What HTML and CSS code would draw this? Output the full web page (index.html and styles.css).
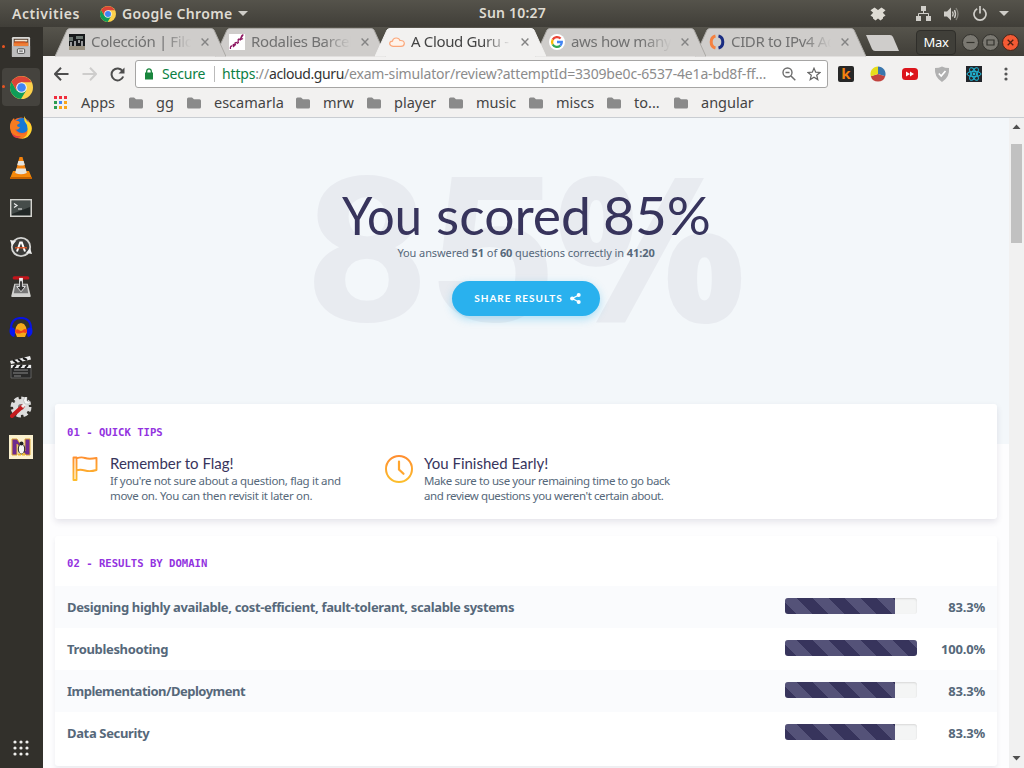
FILE: index.html
```html
<!DOCTYPE html>
<html lang="en">
<head>
<meta charset="utf-8">
<title>A Cloud Guru - Exam results</title>
<link rel="stylesheet" href="styles.css">
</head>
<body>
<svg width="0" height="0" class="defs">
  <defs>
    <linearGradient id="amber" gradientUnits="userSpaceOnUse" x1="0" y1="0" x2="0" y2="28"><stop offset="0" stop-color="#ff8c30"/><stop offset="1" stop-color="#fcc02c"/></linearGradient>
    <symbol id="chrome" viewBox="0 0 24 24">
      <circle cx="12" cy="12" r="12" fill="#fcd04b"/>
      <path d="M1.6 6A12 12 0 0 0 11.5 24L17 14.8 12 12 6.8 15z" fill="#0f9d58"/>
      <path d="M1.6 6A12 12 0 0 1 22.4 6.5H12L6.8 15z" fill="#db4437"/>
      <circle cx="12" cy="12" r="5.6" fill="#f4f4f4"/><circle cx="12" cy="12" r="4.5" fill="#4285f4"/>
    </symbol>
    <symbol id="folder" viewBox="0 0 14 12"><path d="M0 2Q0 .5 1.5 .5H5L7 2.3H12.5Q14 2.3 14 3.8V10Q14 11.5 12.5 11.5H1.5Q0 11.5 0 10z" fill="#8a8a8a"/></symbol>
    <symbol id="close" viewBox="0 0 8 8"><path d="M.6.6 7.4 7.4M7.4.6.6 7.4" stroke="#848484" stroke-width="1.4"/></symbol>
    <symbol id="tabshape" viewBox="0 0 171 29"><path d="M0 28.5 12 2Q13 .5 15 .5H156Q158 .5 159 2L171 28.5"/></symbol>
  </defs>
</svg>

<header class="panel">
  <span class="activities">Activities</span>
  <svg class="panel-chrome" width="16" height="16"><use href="#chrome"/></svg>
  <span class="appname">Google Chrome</span>
  <svg class="caret" width="10" height="5"><path d="M0 0H10L5 5z" fill="#cfcdc8"/></svg>
  <span class="clock">Sun 10:27</span>
  <div class="tray">
    <svg width="16" height="14" viewBox="0 0 16 14"><path d="M4.5 .5 8 3 11.5 .5 15.500 3.200 12.800 5.800 15.500 8.500 13 10.200V11.500L10.500 13.500 8 11.500 5.500 13.500 3 11.500V10.200L.5 8.500 3.200 5.800 .5 3.200z" fill="#dedbd3"/></svg>
    <svg class="net" width="15" height="15" viewBox="0 0 15 15"><path d="M5 0H10V5H5zM0 10H5V15H0zM10 10H15V15H10z" fill="#d0cec9"/><path d="M7.500 5V8M2.500 10V7.500H12.500V10" stroke="#d0cec9" fill="none"/></svg>
    <svg class="vol" width="15" height="14" viewBox="0 0 15 14"><path d="M0 4.500H3L7 .500V13.500L3 9.500H0z" fill="#d0cec9"/><path d="M8.500 4.500Q10 7 8.500 9.500M10.500 3Q12.500 7 10.500 11" stroke="#d0cec9" stroke-width="1.400" fill="none"/><path d="M12 1Q16 7 12 13" stroke="#86847d" stroke-width="1.300" fill="none"/></svg>
    <svg class="power" width="14" height="15" viewBox="0 0 14 15"><path d="M4.200 2.800A6 6 0 1 0 9.800 2.800M7 0V7.500" stroke="#d0cec9" stroke-width="1.700" fill="none"/></svg>
    <svg class="caret2" width="10" height="5"><path d="M0 0H10L5 5z" fill="#cfcdc8"/></svg>
  </div>
</header>

<div class="desktop">
<nav class="dock">
  <div class="app running"><svg width="20" height="22" viewBox="0 0 22 24"><rect x="1" y="1" width="20" height="22" rx="1.500" fill="#d8d8d6"/><path d="M3 3H19V12H3z" fill="#4b3425"/><path d="M4 4H18V6H4z" fill="#f5e5cf"/><path d="M3 7H19V11H3z" fill="#ee7f36"/><path d="M4 6H15L17 8H4z" fill="#d85a20"/><path d="M1 11H21V23H1z" fill="#bdbdbd"/><rect x="7" y="14" width="8" height="5" rx="1" fill="#eee" stroke="#444"/><path d="M9 16.500H13" stroke="#333"/></svg></div>
  <div class="app running active"><svg width="23" height="23"><use href="#chrome" width="23" height="23"/></svg></div>
  <div class="app"><svg width="22" height="23" viewBox="0 0 22 23"><circle cx="11" cy="12" r="10.500" fill="#f4662a"/><circle cx="12" cy="9.500" r="7.500" fill="#1578d5"/><path d="M14 0 17 5Q23 8 21.500 15 19 23 11 22.800 17 20 17.500 14 18 9 14.500 5z" fill="#ffd52e"/><path d="M0 12Q-.500 6 4 2L5 5Q9 4 10 7L7 9Q7 11 10 11 8 15 5 13 6 19 12 18.500 17 18 17.500 14 18 21 11 22.500 1 22 0 12" fill="#f77b20"/><path d="M1 16Q4 21 11 20 7 24 3 20z" fill="#e23b45"/></svg></div>
  <div class="app"><svg width="22" height="23" viewBox="0 0 22 23"><path d="M3 15H19L22 22.500H0z" fill="#f58a0b"/><path d="M9.500 1H12.500L17 18Q11 21 5 18z" fill="#f5820c"/><path d="M8.300 5H13.700L14.800 9Q11 10 7.200 9zM6.300 12.500H15.700L16.800 17Q11 19.500 5.200 17z" fill="#e6e4df"/><path d="M0 21H22V23H0z" fill="#c66200"/></svg></div>
  <div class="app term"><svg width="22" height="18" viewBox="0 0 22 18"><rect x=".750" y=".750" width="20.500" height="16.500" fill="#222827" stroke="#d4d4d0" stroke-width="1.500"/><path d="M2 2H20V8L2 15z" fill="#454c4a"/><path d="M4 4.500 7 6.500 4 8.500M8 10H12" stroke="#eee" stroke-width="1.200" fill="none"/></svg></div>
  <div class="app"><svg width="22" height="22" viewBox="0 0 22 22"><circle cx="11" cy="11" r="9.200" fill="#3c3c3a" stroke="#d5d5d3" stroke-width="1.800"/><path d="M0 4 6 5 2 10zM22 18 16 17 20 12z" fill="#eee"/><path d="M7 15.500 10.200 6.500H11.800L15 15.500" stroke="#fff" stroke-width="2" fill="none"/><path d="M5 11.800H17" stroke="#e85523" stroke-width="1.300"/></svg></div>
  <div class="app"><svg width="20" height="22" viewBox="0 0 20 23"><path d="M3 8H17L20 20V22H0V20z" fill="#d1d1cf"/><path d="M4 9H16L17.500 18H2.500z" fill="#777"/><path d="M3 2H17" stroke="#c3141b" stroke-width="3.500" stroke-linecap="round"/><path d="M8 2H12V7H8z" fill="#eee"/><path d="M8.500 5H11.500V11H14.500L10 16.500 5.500 11H8.500z" fill="#333" stroke="#eee" stroke-width=".900"/></svg></div>
  <div class="app"><svg width="24" height="21" viewBox="0 0 24 21"><path d="M6 15 7 10 9 7 12 6 15 7 17 10 18 15 16 20H8z" fill="#f5a91a"/><path d="M5 14Q8 11 10 13T14 13 18 13 19 14L17 16Q14 15 12 16T7 16z" fill="#f2431a"/><path d="M2 12Q2 1 12 1T22 12" stroke="#0914e2" stroke-width="2.200" fill="none"/><path d="M1 11Q6 9 6 14T5 20Q-1 18 1 11M23 11Q18 9 18 14T19 20Q25 18 23 11" fill="#0817f0"/></svg></div>
  <div class="app"><svg width="22" height="23" viewBox="0 0 22 23"><path d="M1 9H21V22H1z" fill="#292929" stroke="#777" stroke-width=".700"/><path d="M0 5 20 0 21 3.500 1 8z" fill="#eee"/><path d="M1 9H21V12H1z" fill="#eee"/><path d="M3 4 7 7M8 3 12 6M13 2 17 4M3 12 6 9M9 12 12 9M15 12 18 9" stroke="#171717" stroke-width="2"/><path d="M4 14H18M3 17H18M4 20H11" stroke="#888"/></svg></div>
  <div class="app"><svg width="22" height="22" viewBox="0 0 22 22"><circle cx="11" cy="11" r="8" fill="#ddd" stroke="#ddd" stroke-width="5" stroke-dasharray="4 2.280"/><circle cx="11" cy="11" r="3" fill="#777"/><path d="M2 20 13 10" stroke="#c61c1f" stroke-width="4" stroke-linecap="round"/><path d="M12 11 17 6" stroke="#eee" stroke-width="3"/><path d="M15 1Q12 4 15 8 19 9 21 6L17 5 17 1" fill="#f5f5f5" stroke="#999" stroke-width=".500"/></svg></div>
  <div class="app"><svg width="24" height="24" viewBox="0 0 24 24"><path d="M0 0H24V24H0z" fill="#fbf1cf"/><path d="M3 4H8L16 16V4H21V20H17L8 9V20H3z" fill="#6e2a90" stroke="#dca530"/><ellipse cx="12.500" cy="14" rx="3.200" ry="5" fill="#f4f4f4" stroke="#222"/><circle cx="12.500" cy="8.500" r="2" fill="#222"/><path d="M9 19.500H12M13 19.500H16" stroke="#edb82b" stroke-width="2"/></svg></div>
  <svg class="grid" width="16" height="16" viewBox="0 0 16 16"><g fill="#efefed"><circle cx="2" cy="2" r="1.600"/><circle cx="8" cy="2" r="1.600"/><circle cx="14" cy="2" r="1.600"/><circle cx="2" cy="8" r="1.600"/><circle cx="8" cy="8" r="1.600"/><circle cx="14" cy="8" r="1.600"/><circle cx="2" cy="14" r="1.600"/><circle cx="8" cy="14" r="1.600"/><circle cx="14" cy="14" r="1.600"/></g></svg>
</nav>

<main class="window">
  <div class="tabstrip">
    <div class="tab t1"><svg class="shape" width="171" height="29"><use href="#tabshape"/></svg>
      <svg class="fav" width="16" height="16" viewBox="0 0 16 16"><path d="M0 0H16V16H0z" fill="#17191b"/><path d="M0 3H4V7H0zM7 2H14V5H7z" fill="#6c7772"/><path d="M0 12H16V16H0z" fill="#99907f"/><path d="M6 7V12M10 6V9M13 7V12M2 8V12" stroke="#ddd" stroke-width="1.300"/></svg>
      <span class="label">Colección | Filosofía</span><svg class="x" width="8" height="8"><use href="#close"/></svg></div>
    <div class="tab t2"><svg class="shape" width="171" height="29"><use href="#tabshape"/></svg>
      <svg class="fav" width="16" height="16" viewBox="0 0 16 16"><path d="M0 0H16V16H0z" fill="#fff"/><path d="M1.500 15Q1 12 3 12M4 12.500Q6 12 5 10.500 3 11 5 13M6.500 11.500 6 9Q8 7.500 8.500 10M10 4.500Q8 9 10 8.500M11 6.500Q13 0 14 1 10 7 14 4.500M8.500 6 12 4.500" stroke="#8d1761" stroke-width="1.300" fill="none"/></svg>
      <span class="label">Rodalies Barcelona</span><svg class="x" width="8" height="8"><use href="#close"/></svg></div>
    <div class="tab t3 current"><svg class="shape" width="171" height="29"><use href="#tabshape"/></svg>
      <svg class="fav" width="16" height="16" viewBox="0 0 16 16"><path d="M4 12.300Q.700 12 .700 9.600.800 7.200 3.500 7.200 4 4 7.200 4 10.200 4 11 6.500 15.300 6.200 15.300 9.600 15 12.300 12 12.300z" fill="#fff3ea" stroke="#fba77a" stroke-width="1.200"/></svg>
      <span class="label">A Cloud Guru - AWS</span><svg class="x" width="8" height="8"><use href="#close"/></svg></div>
    <div class="tab t4"><svg class="shape" width="171" height="29"><use href="#tabshape"/></svg>
      <svg class="fav" width="16" height="16" viewBox="0 0 16 16"><circle cx="8" cy="8" r="8" fill="#fff"/><g fill="none" stroke-width="2.300"><path d="M3.700 5.600A5 5 0 0 1 11.600 4.500" stroke="#ea4335"/><path d="M3.700 5.600A5 5 0 0 0 3.700 10.500" stroke="#fbbc05"/><path d="M3.700 10.500A5 5 0 0 0 11.300 11.700" stroke="#34a853"/><path d="M11.300 11.700A5 5 0 0 0 12.800 8H8" stroke="#4285f4"/></g></svg>
      <span class="label">aws how many regions</span><svg class="x" width="8" height="8"><use href="#close"/></svg></div>
    <div class="tab t5"><svg class="shape" width="171" height="29"><use href="#tabshape"/></svg>
      <svg class="fav" width="16" height="16" viewBox="0 0 16 16"><path d="M6.500 2Q2.200 3 2.200 8T6.500 14" fill="none" stroke="#f5813f" stroke-width="3"/><path d="M9.500 2Q13.800 3 13.800 8T9.500 14" fill="none" stroke="#1b2d82" stroke-width="3"/></svg>
      <span class="label">CIDR to IPv4 Address</span><svg class="x" width="8" height="8"><use href="#close"/></svg></div>
    <svg class="newtab" width="33" height="16" viewBox="0 0 33 16"><path d="M0 0H24Q26 0 27 2L33 16H9Q7 16 6 14z" fill="#cfcdcb"/></svg>
    <div class="wm"><span class="profile">Max</span>
      <svg width="17" height="17" viewBox="0 0 17 17"><circle cx="8.500" cy="8.500" r="8" fill="#7a7871" stroke="#33322d"/><path d="M4.500 8.500H12.500" stroke="#33322d" stroke-width="1.200"/></svg>
      <svg width="17" height="17" viewBox="0 0 17 17"><circle cx="8.500" cy="8.500" r="8" fill="#7a7871" stroke="#33322d"/><path d="M5 6H12V11H5z" fill="none" stroke="#33322d" stroke-width="1.200"/></svg>
      <svg width="17" height="17" viewBox="0 0 17 17"><circle cx="8.500" cy="8.500" r="8" fill="#f45a34" stroke="#43261c"/><path d="M5.700 5.700 11.300 11.300M11.300 5.700 5.700 11.300" stroke="#4c2013" stroke-width="1.300"/></svg>
    </div>
  </div>

  <div class="toolbar">
    <svg class="back" width="15" height="14" viewBox="0 0 15 14"><path d="M7 .800 1 7 7 13.200M1 7H14.500" stroke="#4d4d4d" stroke-width="2" fill="none"/></svg>
    <svg class="fwd" width="15" height="14" viewBox="0 0 15 14"><path d="M8 .800 14 7 8 13.200M14 7H.500" stroke="#cecdcc" stroke-width="2" fill="none"/></svg>
    <svg class="reload" width="15" height="15" viewBox="0 0 15 15"><path d="M12.500 4A6 6 0 1 0 13.200 9.500" stroke="#4d4d4d" stroke-width="2" fill="none"/><path d="M14.500 .500V6.500H8.500z" fill="#4d4d4d"/></svg>
    <div class="omnibox">
      <svg width="8" height="12" viewBox="0 0 8 12"><path d="M0 4.500H8V11.500H0z" fill="#19863d"/><path d="M1.700 5V3Q2 .800 4 .800T6.300 3V5" stroke="#19863d" stroke-width="1.300" fill="none"/></svg>
      <span class="secure">Secure</span><span class="divider"></span>
      <span class="url"><b>https</b>://<i>acloud.guru</i>/exam-simulator/review?attemptId=3309be0c-6537-4e1a-bd8f-ff…</span>
      <svg class="mag" width="14" height="14" viewBox="0 0 14 14"><circle cx="5.500" cy="5.500" r="4.500" fill="none" stroke="#6d6d6d" stroke-width="1.400"/><path d="M3.500 5.500H7.500M9 9 13.300 13.300" stroke="#6d6d6d" stroke-width="1.500"/></svg>
      <svg class="star" width="14" height="14" viewBox="0 0 14 14"><path d="M7 1.200 8.700 5.200 13 5.500 9.700 8.200 10.800 12.600 7 10.200 3.200 12.600 4.300 8.200 1 5.500 5.300 5.200z" fill="none" stroke="#646464" stroke-width="1.200"/></svg>
    </div>
    <div class="exts">
      <span class="ext-k">k</span>
      <svg width="16" height="16" viewBox="0 0 16 16"><path d="M8 8V.500A7.500 7.500 0 0 1 15.200 10.200z" fill="#3a76ad"/><path d="M8 8 15.200 10.200A7.500 7.500 0 0 1 .800 10.200z" fill="#c2433f"/><path d="M8 8 .800 10.200A7.500 7.500 0 0 1 8 .500z" fill="#e6dc1c"/></svg>
      <svg width="16" height="16" viewBox="0 0 16 16"><rect y="2" width="16" height="12" rx="3.500" fill="#dc151c"/><path d="M4 5.500 8 8 4 10.500zM8 5.500 12 8 8 10.500z" fill="#fff"/></svg>
      <svg width="16" height="16" viewBox="0 0 16 16"><path d="M8 .500Q11 2 15 2 16 11 8 16 0 11 1 2 5 2 8 .500" fill="#b1b1b1"/><path d="M4.800 7.500 7.200 10 11.500 5" stroke="#fff" stroke-width="1.700" fill="none"/></svg>
      <svg width="16" height="16" viewBox="0 0 16 16"><path d="M0 0H16V16H0z" fill="#22252a"/><g fill="none" stroke="#20b7d8"><ellipse cx="8" cy="8" rx="7" ry="2.700"/><ellipse cx="8" cy="8" rx="7" ry="2.700" transform="rotate(60 8 8)"/><ellipse cx="8" cy="8" rx="7" ry="2.700" transform="rotate(120 8 8)"/></g><circle cx="8" cy="8" r="1.400" fill="#20b7d8"/></svg>
      <svg class="dots" width="4" height="14" viewBox="0 0 4 14"><g fill="#555"><circle cx="2" cy="2" r="1.600"/><circle cx="2" cy="7" r="1.600"/><circle cx="2" cy="12" r="1.600"/></g></svg>
    </div>
  </div>

  <div class="bookmarks">
    <svg class="appsicon" width="14" height="14" viewBox="0 0 14 14"><path d="M0 0H3V3H0zM5 0H8V3H5zM10 0H13V3H10z" fill="#f02d3d"/><path d="M0 5H3V8H0zM0 10H3V13H0z" fill="#2b9c51"/><path d="M5 5H8V8H5z" fill="#4285f4"/><path d="M10 5H13V8H10zM5 10H8V13H5zM10 10H13V13H10z" fill="#faa51a"/></svg>
    <span class="bm b0">Apps</span>
    <svg width="14" height="12"><use href="#folder"/></svg><span class="bm b1">gg</span>
    <svg width="14" height="12"><use href="#folder"/></svg><span class="bm b2">escamarla</span>
    <svg width="14" height="12"><use href="#folder"/></svg><span class="bm b3">mrw</span>
    <svg width="14" height="12"><use href="#folder"/></svg><span class="bm b4">player</span>
    <svg width="14" height="12"><use href="#folder"/></svg><span class="bm b5">music</span>
    <svg width="14" height="12"><use href="#folder"/></svg><span class="bm b6">miscs</span>
    <svg width="14" height="12"><use href="#folder"/></svg><span class="bm b7">to...</span>
    <svg width="14" height="12"><use href="#folder"/></svg><span class="bm b8">angular</span>
  </div>

  <div class="viewport">
    <div class="page">
      <section class="hero">
        <svg class="ghost" width="460" height="180" aria-hidden="true">
          <g class="ghost-t">
            <text x="4" y="163" textLength="126" lengthAdjust="spacingAndGlyphs">8</text>
            <text x="127" y="163" textLength="130" lengthAdjust="spacingAndGlyphs">5</text>
            <text class="ghost-pct" x="256" y="164" textLength="189" lengthAdjust="spacingAndGlyphs">%</text>
          </g>
        </svg>
        <svg class="score" width="380" height="60">
          <g class="score-t">
            <text x="6" y="46" textLength="80" lengthAdjust="spacingAndGlyphs">You</text>
            <text x="100" y="46" textLength="155" lengthAdjust="spacingAndGlyphs">scored</text>
            <text x="267" y="46" textLength="108" lengthAdjust="spacingAndGlyphs">85%</text>
          </g>
        </svg>
        <p class="answered">You answered <b>51</b> of <b>60</b> questions correctly in <b>41:20</b></p>
        <a class="share">SHARE RESULTS <svg width="11" height="11" viewBox="0 0 11 11"><path d="M9 2 2.200 5.500 9 9" stroke="#fff" stroke-width="1.300" fill="none"/><circle cx="8.700" cy="2.100" r="2" fill="#fff"/><circle cx="2.200" cy="5.500" r="2.100" fill="#fff"/><circle cx="8.700" cy="8.900" r="2" fill="#fff"/></svg></a>
      </section>

      <section class="card tips">
        <h2>01 - QUICK TIPS</h2>
        <div class="tiprow">
          <article class="tip one">
            <svg width="28" height="28" viewBox="0 0 28 28"><path d="M2.500 2.500H5.500V25H2.500zM5.500 3.500Q10 1.500 14 3T25.500 3V15Q19 17 14 15.500T5.500 15.500" fill="none" stroke="url(#amber)" stroke-width="1.900" stroke-linejoin="round"/></svg>
            <div><h3>Remember to Flag!</h3><p>If you're not sure about a question, flag it and</p><p>move on. You can then revisit it later on.</p></div>
          </article>
          <article class="tip two">
            <svg width="28" height="28" viewBox="0 0 28 28"><circle cx="14" cy="14" r="13" fill="none" stroke="url(#amber)" stroke-width="2"/><path d="M14 6.500V14.500L18.500 18.800" fill="none" stroke="#ffa52e" stroke-width="2.200" stroke-linecap="round"/></svg>
            <div><h3>You Finished Early!</h3><p>Make sure to use your remaining time to go back</p><p>and review questions you weren't certain about.</p></div>
          </article>
        </div>
      </section>

      <section class="card results">
        <h2>02 - RESULTS BY DOMAIN</h2>
        <div class="row"><span>Designing highly available, cost-efficient, fault-tolerant, scalable systems</span><div class="bar"><div class="fill" style="width:83.3%"></div></div><span class="pct">83.3%</span></div>
        <div class="row"><span>Troubleshooting</span><div class="bar"><div class="fill" style="width:100%"></div></div><span class="pct">100.0%</span></div>
        <div class="row"><span class="tight">Implementation/Deployment</span><div class="bar"><div class="fill" style="width:83.3%"></div></div><span class="pct">83.3%</span></div>
        <div class="row"><span>Data Security</span><div class="bar"><div class="fill" style="width:83.3%"></div></div><span class="pct">83.3%</span></div>
      </section>
    </div>
    <div class="scrollbar">
      <svg width="9" height="5"><path d="M.500 5H8.500L4.500 .500z" fill="#505050"/></svg>
      <div class="thumb"></div>
      <svg class="down" width="9" height="5"><path d="M.500 0H8.500L4.500 4.500z" fill="#505050"/></svg>
    </div>
  </div>
</main>
</div>
</body>
</html>
```
FILE: styles.css
```css
* { box-sizing: border-box; }
body { margin: 0; width: 1024px; height: 768px; overflow: hidden; display: flex; flex-direction: column; font-family: "Noto Sans", "Open Sans", sans-serif; background: #32302b; }
svg { display: block; flex: none; }
.defs { position: absolute; }
h2, h3, p { margin: 0; font-weight: 400; white-space: nowrap; }
span { white-space: nowrap; }

.panel { position: relative; height: 27px; flex: none; display: flex; align-items: center; padding-left: 12px; background: linear-gradient(#55534b, #403e38); color: #dfdbd2; font-weight: 600; font-size: 14px; }
.activities { width: 88px; letter-spacing: .55px; }
.appname { margin-left: 6px; width: 116px; letter-spacing: .35px; }
.clock { position: absolute; left: 479px; top: 3px; letter-spacing: .2px; }
.tray { margin-left: auto; display: flex; align-items: center; padding-right: 15px; }
.net { margin-left: 30px; }
.vol { margin-left: 13px; }
.power { margin-left: 14px; }
.caret2 { margin-left: 12px; }

.desktop { flex: 1; display: flex; min-height: 0; }
.dock { width: 43px; flex: none; display: flex; flex-direction: column; align-items: center; background: #32302b; gap: 2px; padding-top: 1px; }
.app { position: relative; width: 38px; height: 38px; display: flex; align-items: center; justify-content: center; border-radius: 4px; margin-right: 1px; }
.app.active { background: #45433e; }
.term { padding-top: 1px; }
.running::before { content: ""; position: absolute; left: 0; top: 17px; width: 3px; height: 3px; border-radius: 2px; background: #e95420; }
.grid { margin: auto 2px 12px 0; }

.window { flex: 1; display: flex; flex-direction: column; min-width: 0; background: #f2f1f0; }
.tabstrip { height: 29px; display: flex; flex: none; padding-left: 12px; background: linear-gradient(#56544c, #403e38); }
.tab { position: relative; width: 160px; flex: none; display: flex; align-items: center; padding: 1px 0 0 14px; color: #717171; font-size: 15px; }
.shape { position: absolute; left: 0; top: 1px; fill: #cfcdcb; stroke: #aba9a5; }
.fav { position: relative; margin-right: 6px; }
.label { position: relative; width: 101px; padding-bottom: 2px; overflow: hidden; letter-spacing: -.35px; -webkit-mask-image: linear-gradient(90deg, #000 72px, transparent 100px); mask-image: linear-gradient(90deg, #000 72px, transparent 100px); }
.x { position: relative; margin-left: 9px; }
.t1 { z-index: 5; } .t2 { z-index: 4; } .t4 { z-index: 4; } .t5 { z-index: 3; }
.current { z-index: 6; color: #444; }
.current .shape { fill: #f2f1f0; stroke: #f2f1f0; }
.newtab { margin: 8px 0 0 11px; }
.wm { display: flex; align-items: center; margin-left: auto; padding: 1px 5px 0 0; gap: 3px; }
.profile { width: 40px; height: 25px; margin-right: 3px; line-height: 23px; text-align: center; border: 1px solid #2f2e2a; border-radius: 4px; color: #fff; background: #403f39; font-size: 13px; letter-spacing: -.3px; }

.toolbar { height: 35px; flex: none; display: flex; align-items: center; padding: 1px 0 0 11px; }
.fwd { margin-left: 13px; }
.reload { margin-left: 13px; }
.omnibox { margin-left: 10px; width: 693px; height: 28px; display: flex; align-items: center; background: #fff; border: 1px solid #a6a5a4; border-radius: 3px; padding-left: 9px; font-size: 14px; }
.secure { width: 52px; margin-left: 9px; padding-bottom: 2px; color: #0b8043; letter-spacing: -.2px; }
.divider { width: 1px; height: 16px; background: #bbb; margin-right: 7px; }
.url { width: 560px; padding-bottom: 2px; color: #8c8c8c; letter-spacing: -.165px; }
.url b { font-weight: 400; color: #0b8043; }
.url i { font-style: normal; color: #333; letter-spacing: -.4px; }
.star { margin-left: 11px; }
.exts { display: flex; align-items: center; margin-left: 10px; gap: 16px; }
.ext-k { width: 16px; height: 16px; border-radius: 2px; background: #272727; color: #f58110; font: bold 15px/15px "Noto Sans", sans-serif; text-align: center; }
.dots { margin-left: 6px; }

.bookmarks { height: 27px; flex: none; display: flex; align-items: center; padding: 0 0 3px 11px; color: #444; font-size: 14.5px; border-bottom: 1px solid #c9cdd2; }
.bm { margin-left: 13px; padding-bottom: 2px; }
.b0 { width: 48px; } .b1 { width: 31px; } .b2 { width: 82px; } .b3 { width: 44px; } .b4 { width: 55px; } .b5 { width: 53px; } .b6 { width: 51px; } .b7 { width: 40px; }

.viewport { flex: 1; display: flex; min-height: 0; }
.page { flex: 1; overflow: hidden; background: linear-gradient(#f3f7fa 326px, #fdfdfe 326px); padding: 0 12px; }
.hero { position: relative; height: 286px; display: flex; flex-direction: column; align-items: center; padding-top: 71px; }
.ghost { position: absolute; left: 245px; top: 40px; }
.ghost-t { font: 700 203px Roboto, sans-serif; fill: #e8ebf0; }
.ghost-pct { font: 800 203px "Open Sans", sans-serif; }
.score { position: relative; }
.score-t { font: 400 53px Lato, sans-serif; fill: #37345c; }
.answered { position: relative; margin-top: -5px; font-size: 11px; line-height: 18px; letter-spacing: -.08px; color: #56687a; }
.share { position: relative; margin-top: 19px; padding: 0 0 1px 3px; width: 148px; height: 35px; border-radius: 18px; background: #29b1ee; box-shadow: 0 3px 8px rgba(41,177,238,.35); color: #fff; font: 700 10px Lato, sans-serif; letter-spacing: 1px; display: flex; gap: 7px; align-items: center; justify-content: center; }

.card { width: 942px; background: #fff; border-radius: 3px; box-shadow: 0 3px 6px rgba(55,52,92,.12); }
.card h2 { font: 700 10.6px "DejaVu Sans Mono", monospace; color: #9333e0; line-height: 14px; }
.tips { height: 115px; padding: 21px 12px 0; }
.tiprow { display: flex; padding-top: 16px; }
.tip { display: flex; gap: 11px; }
.one { width: 314px; flex: none; padding-left: 4px; }
.two { padding-left: 4px; }
.tip h3 { margin-top: -1px; font: 400 15px/18px Lato, sans-serif; color: #37345c; }
.tip p { position: relative; top: 1px; font-size: 11.5px; line-height: 15px; color: #56687a; letter-spacing: -.33px; }
.two p { letter-spacing: -.41px; }
.results { height: 230px; margin-top: 17px; padding-top: 20px; box-shadow: 0 3px 5px rgba(55,52,92,.09); }
.results h2 { margin: 0 12px 16px; }
.row { height: 42px; display: flex; align-items: center; padding: 0 12px; color: #56687a; font-weight: 700; font-size: 13px; letter-spacing: -.35px; }
.row:nth-child(even) { background: #fafbfd; }
.tight { letter-spacing: -.5px; }
.bar { margin-left: auto; width: 132px; height: 16px; margin-bottom: 2px; border-radius: 3px; overflow: hidden; background: #f4f5f5; box-shadow: inset 0 1px 2px rgba(0,0,0,.12); }
.fill { height: 100%; background: linear-gradient(45deg, #545278 25%, #37345c 25% 50%, #545278 50% 75%, #37345c 75%) -5px 0 / 32px 32px; }
.pct { width: 68px; text-align: right; letter-spacing: -.2px; }

.scrollbar { width: 15px; flex: none; display: flex; flex-direction: column; align-items: center; background: #f1f1f1; padding-top: 6px; }
.thumb { width: 11px; height: 99px; margin-top: 15px; background: #c1c1c1; }
.down { margin: auto 0 7px; }
```
